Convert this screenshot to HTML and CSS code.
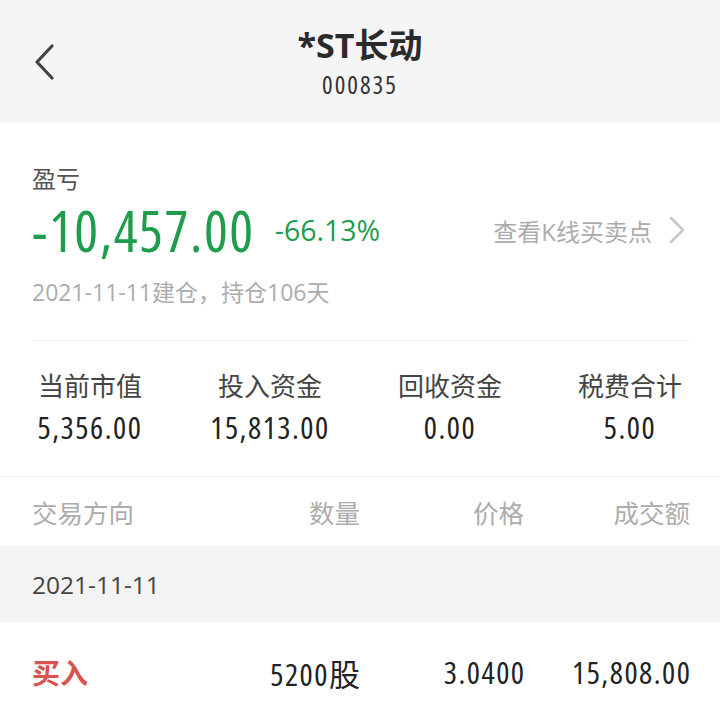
FILE: index.html
```html
<!DOCTYPE html>
<html lang="zh">
<head>
<meta charset="utf-8">
<title>*ST长动</title>
<link rel="stylesheet" href="styles.css">
</head>
<body>
<header class="nav">
  <div class="nav-back">
    <svg width="24" height="38" viewBox="0 0 24 38"><path d="M20 3 L5 19 L20 35" fill="none" stroke="#444" stroke-width="3.2" stroke-linecap="round" stroke-linejoin="round"/></svg>
  </div>
  <div class="nav-title">
    <div class="nav-name">*ST长动</div>
    <div class="nav-code">000835</div>
  </div>
  <div></div>
</header>

<section class="summary">
  <div class="label">盈亏</div>
  <div class="pl-row">
    <span class="pl-amount">-10,457.00</span>
    <span class="pl-rate">-66.13%</span>
    <span class="kline">查看K线买卖点
      <svg width="18" height="28" viewBox="0 0 18 28"><path d="M3 2 L15 14 L3 26" fill="none" stroke="#c8c8c8" stroke-width="2.8" stroke-linecap="round" stroke-linejoin="round"/></svg>
    </span>
  </div>
  <div class="hold">2021-11-11建仓，持仓106天</div>
</section>

<section class="stats">
  <div class="stat"><div class="stat-label">当前市值</div><div class="stat-value">5,356.00</div></div>
  <div class="stat"><div class="stat-label">投入资金</div><div class="stat-value">15,813.00</div></div>
  <div class="stat"><div class="stat-label">回收资金</div><div class="stat-value">0.00</div></div>
  <div class="stat"><div class="stat-label">税费合计</div><div class="stat-value">5.00</div></div>
</section>

<div class="thead grid">
  <span>交易方向</span><span class="r">数量</span><span class="r">价格</span><span class="r">成交额</span>
</div>
<div class="date-band">2021-11-11</div>
<div class="trow grid">
  <span class="buy">买入</span><span class="r">5200股</span><span class="r">3.0400</span><span class="r">15,808.00</span>
</div>
</body>
</html>
```
FILE: styles.css
```css
* { box-sizing: border-box; }
body {
  margin: 0;
  background: #fff;
  font-family: "Open Sans", "Noto Sans CJK SC", sans-serif;
  color: #333;
}
.nav {
  height: 123px;
  background: #f5f5f5;
  display: grid;
  grid-template-columns: 1fr auto 1fr;
  align-items: start;
}
.nav-back { padding: 43px 0 0 32px; }
.nav-title { text-align: center; padding-top: 24px; }
.nav-name { font-size: 34px; font-weight: bold; color: #2a2a2a; line-height: 42px; }
.nav-code { font-size: 25px; font-stretch: 75%; letter-spacing: 2px; color: #333; line-height: 28px; margin-top: 4px; }

.summary { padding: 40px 30px 0 32px; }
.summary .label { font-size: 24px; color: #555; line-height: 32px; }
.pl-row { display: flex; align-items: center; margin-top: 5px; height: 60px; }
.pl-amount { font-size: 56px; font-stretch: 75%; letter-spacing: 1.6px; color: #1e9d4c; font-weight: 500; }
.pl-rate { font-size: 28.5px; color: #1e9d4c; margin-left: 20px; font-weight: 500; }
.kline { margin-left: auto; margin-right: 4px; font-size: 24px; color: #acacac; display: flex; align-items: center; gap: 16px; }
.hold { font-size: 23px; color: #acacac; margin-top: 17px; line-height: 30px; padding-bottom: 33px; border-bottom: 1px solid #ededed; }

.stats { display: grid; grid-template-columns: repeat(4, 1fr); padding: 28px 0 32px; border-bottom: 1px solid #ededed; }
.stat { text-align: center; }
.stat-label { font-size: 26px; color: #444; line-height: 34px; }
.stat-value { font-size: 31px; font-stretch: 75%; letter-spacing: 1.5px; color: #222; line-height: 34px; margin-top: 7px; }

.grid { display: grid; grid-template-columns: 1fr 110px 164px 166px; padding: 0 30px 0 32px; align-items: center; }
.r { text-align: right; }
.thead { height: 69px; font-size: 25.5px; color: #acacac; }
.date-band { background: #f3f3f3; height: 76px; padding-left: 32px; display: flex; align-items: center; font-size: 24.5px; color: #444; }
.trow { height: 100px; font-size: 31px; font-stretch: 75%; letter-spacing: 1.5px; color: #222; }
.trow .r { margin-right: -1.5px; }
.buy { color: #d9534f; font-weight: bold; font-size: 28px; letter-spacing: 0; }
```
